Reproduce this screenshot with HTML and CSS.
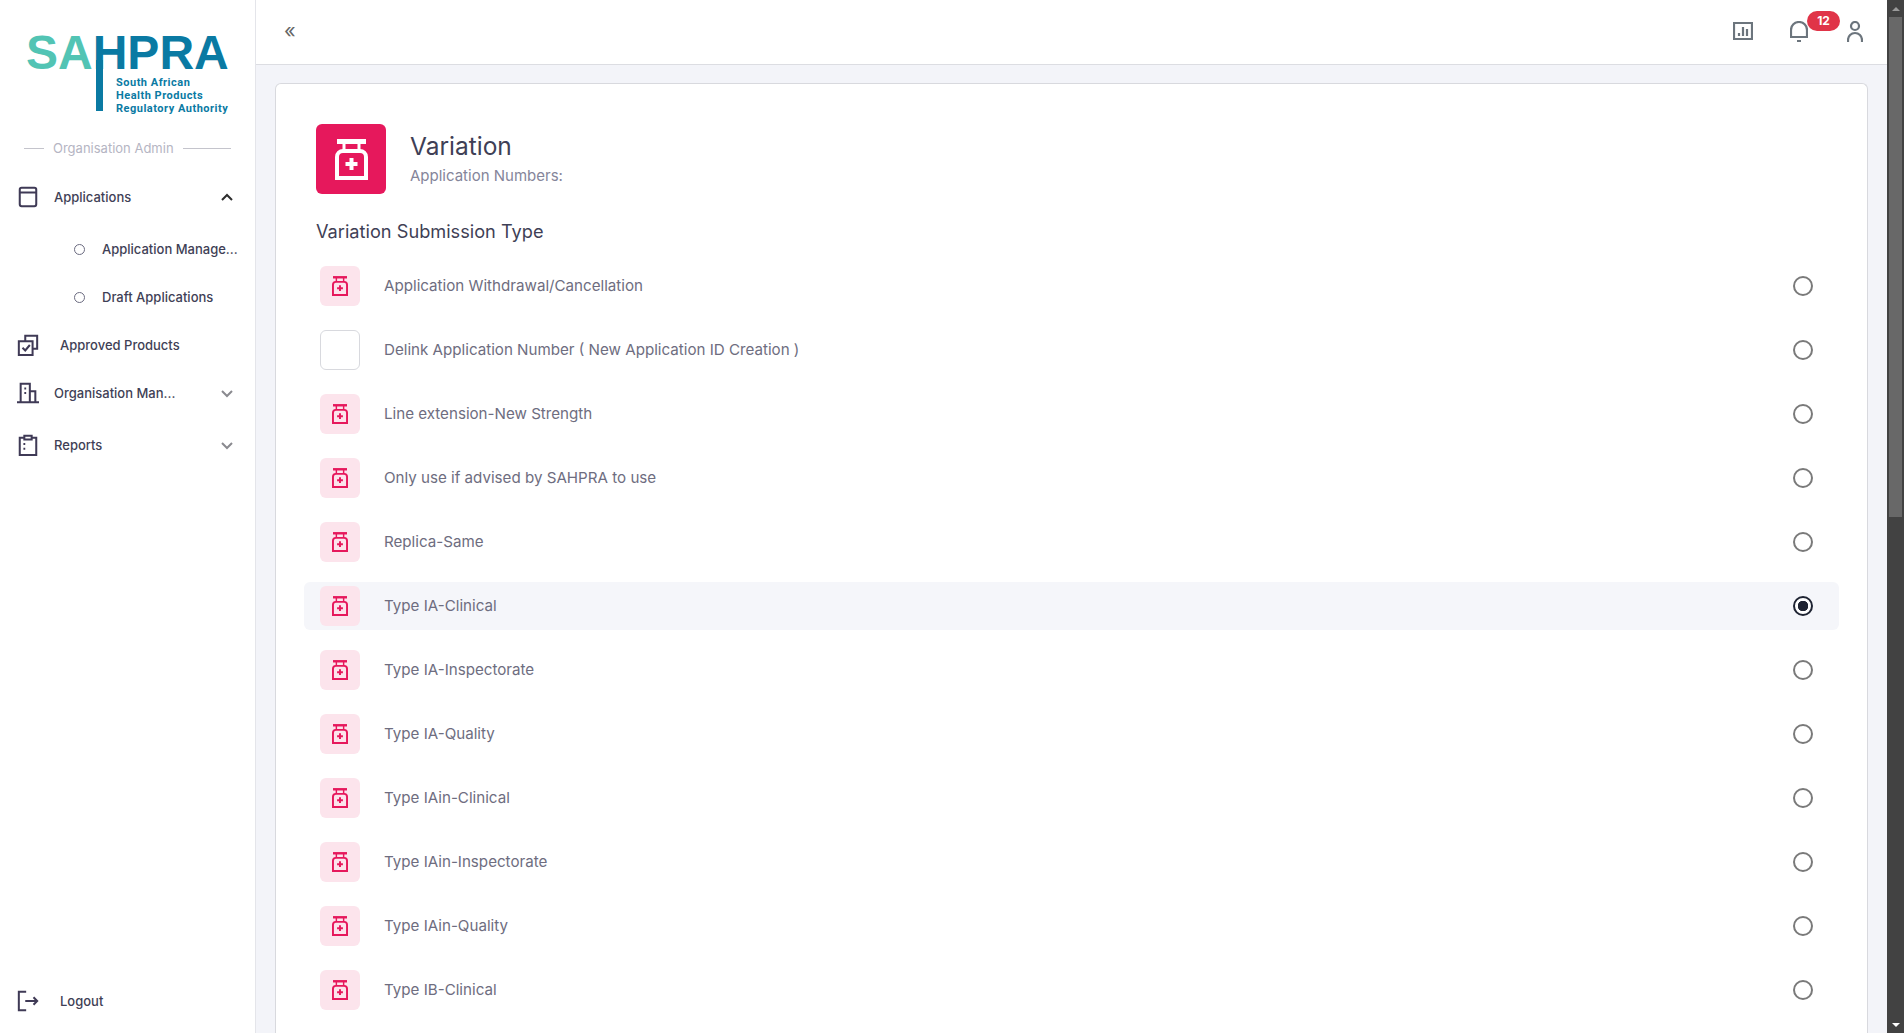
FILE: index.html
```html
<!DOCTYPE html>
<html lang="en">
<head>
    <meta charset="UTF-8">
    <meta name="viewport" content="width=device-width, initial-scale=1.0">
    <title>SAHPRA - Variation</title>
    <link rel="stylesheet" href="styles.css">
</head>
<body>
    <svg class="defs" aria-hidden="true">
        <symbol id="bottle" viewBox="0 0 33 41">
            <path d="M2 2.500H31" fill="none" stroke="currentColor" stroke-width="5"/>
            <path d="M9 4V12M24 4V12" fill="none" stroke="currentColor" stroke-width="3"/>
            <path d="M2 18a6 6 0 0 1 6-6h17a6 6 0 0 1 6 6V39H2Z" fill="none" stroke="currentColor" stroke-width="4"/>
            <path d="M16.500 19v12M10.500 25h12" fill="none" stroke="currentColor" stroke-width="4"/>
        </symbol>
    </svg>

    <div class="app">
        <aside class="sidebar">
            <div class="logo">
                <div class="logo-word"><span class="logo-sa">SA</span><span class="logo-h">H</span><span class="logo-pra">PRA</span></div>
                <div class="logo-stem"></div>
                <div class="logo-sub">South African<br>Health Products<br>Regulatory Authority</div>
            </div>

            <div class="role"><span>Organisation Admin</span></div>

            <nav class="menu">
                <div class="menu-item">
                    <svg class="menu-icon" viewBox="0 0 24 24"><path d="M5 2h14a2 2 0 0 1 2 2v16a2 2 0 0 1-2 2H5a2 2 0 0 1-2-2V4a2 2 0 0 1 2-2ZM3 7h18"/></svg>
                    <span class="menu-label">Applications</span>
                    <svg class="chevron chevron-open" viewBox="0 0 14 14"><path d="M2 10l5-5 5 5"/></svg>
                </div>
                <div class="sub-list">
                    <div class="sub-item"><i class="dot"></i><span>Application Manage...</span></div>
                    <div class="sub-item"><i class="dot"></i><span>Draft Applications</span></div>
                </div>
                <div class="menu-item">
                    <svg class="menu-icon" viewBox="0 0 24 24"><path d="M9 7V2h13v14h-5M2 8h15v15H2ZM6 15l3 3 5-6"/></svg>
                    <span class="menu-label menu-label-wide">Approved Products</span>
                </div>
                <div class="menu-item">
                    <svg class="menu-icon" viewBox="0 0 24 24"><path d="M0 22h24M4 22V2h10v20M8 7h2M8 12h2M14 10h6v12"/></svg>
                    <span class="menu-label">Organisation Man...</span>
                    <svg class="chevron" viewBox="0 0 14 14"><path d="M2 5l5 5 5-5"/></svg>
                </div>
                <div class="menu-item menu-item-gap">
                    <svg class="menu-icon" viewBox="0 0 24 24"><path d="M8 4H3v19h18V4h-5M8 2h8v4H8ZM7 11h2M7 16h2"/></svg>
                    <span class="menu-label">Reports</span>
                    <svg class="chevron" viewBox="0 0 14 14"><path d="M2 5l5 5 5-5"/></svg>
                </div>
            </nav>

            <div class="menu-item logout">
                <svg class="menu-icon" viewBox="0 0 24 24"><path d="M10 2H2v20h8M9 12h13M18 8l4 4-4 4"/></svg>
                <span class="menu-label menu-label-wide">Logout</span>
            </div>
        </aside>

        <div class="main">
            <header class="topbar">
                <span class="collapse">«</span>
                <div class="top-icons">
                    <svg class="top-icon chart" viewBox="0 0 20 18"><path d="M1 1h18v16H1ZM6 14v-3M10 14V5M14 14V7"/></svg>
                    <div class="bell-wrap">
                        <svg class="top-icon bell" viewBox="0 0 18 21"><path d="M1 16V9a8 8 0 0 1 16 0v7ZM7 20h4"/></svg>
                        <span class="badge">12</span>
                    </div>
                    <svg class="top-icon user" viewBox="0 0 16 21"><circle cx="8" cy="5" r="4"/><path d="M1 21v-2a7 7 0 0 1 14 0v2"/></svg>
                </div>
            </header>

            <section class="content">
                <div class="card">
                    <div class="card-head">
                        <div class="head-icon"><svg viewBox="0 0 33 41"><use href="#bottle"/></svg></div>
                        <div class="head-text">
                            <h1>Variation</h1>
                            <p>Application Numbers:</p>
                        </div>
                    </div>

                    <h2>Variation Submission Type</h2>

                    <div class="type-row">
                        <div class="type-icon"><svg viewBox="0 0 33 41"><use href="#bottle"/></svg></div>
                        <span class="type-name">Application Withdrawal/Cancellation</span>
                        <i class="radio"></i>
                    </div>
                    <div class="type-row">
                        <div class="type-icon type-icon-empty"></div>
                        <span class="type-name">Delink Application Number ( New Application ID Creation )</span>
                        <i class="radio"></i>
                    </div>
                    <div class="type-row">
                        <div class="type-icon"><svg viewBox="0 0 33 41"><use href="#bottle"/></svg></div>
                        <span class="type-name">Line extension-New Strength</span>
                        <i class="radio"></i>
                    </div>
                    <div class="type-row">
                        <div class="type-icon"><svg viewBox="0 0 33 41"><use href="#bottle"/></svg></div>
                        <span class="type-name">Only use if advised by SAHPRA to use</span>
                        <i class="radio"></i>
                    </div>
                    <div class="type-row">
                        <div class="type-icon"><svg viewBox="0 0 33 41"><use href="#bottle"/></svg></div>
                        <span class="type-name">Replica-Same</span>
                        <i class="radio"></i>
                    </div>
                    <div class="type-row selected">
                        <div class="type-icon"><svg viewBox="0 0 33 41"><use href="#bottle"/></svg></div>
                        <span class="type-name">Type IA-Clinical</span>
                        <i class="radio"></i>
                    </div>
                    <div class="type-row">
                        <div class="type-icon"><svg viewBox="0 0 33 41"><use href="#bottle"/></svg></div>
                        <span class="type-name">Type IA-Inspectorate</span>
                        <i class="radio"></i>
                    </div>
                    <div class="type-row">
                        <div class="type-icon"><svg viewBox="0 0 33 41"><use href="#bottle"/></svg></div>
                        <span class="type-name">Type IA-Quality</span>
                        <i class="radio"></i>
                    </div>
                    <div class="type-row">
                        <div class="type-icon"><svg viewBox="0 0 33 41"><use href="#bottle"/></svg></div>
                        <span class="type-name">Type IAin-Clinical</span>
                        <i class="radio"></i>
                    </div>
                    <div class="type-row">
                        <div class="type-icon"><svg viewBox="0 0 33 41"><use href="#bottle"/></svg></div>
                        <span class="type-name">Type IAin-Inspectorate</span>
                        <i class="radio"></i>
                    </div>
                    <div class="type-row">
                        <div class="type-icon"><svg viewBox="0 0 33 41"><use href="#bottle"/></svg></div>
                        <span class="type-name">Type IAin-Quality</span>
                        <i class="radio"></i>
                    </div>
                    <div class="type-row">
                        <div class="type-icon"><svg viewBox="0 0 33 41"><use href="#bottle"/></svg></div>
                        <span class="type-name">Type IB-Clinical</span>
                        <i class="radio"></i>
                    </div>
                </div>
            </section>
        </div>

        <div class="scrollbar">
            <div class="scroll-btn"><i class="arrow-up"></i></div>
            <div class="scroll-thumb"></div>
            <div class="scroll-track"></div>
            <div class="scroll-btn"><i class="arrow-down"></i></div>
        </div>
    </div>
</body>
</html>
```

FILE: styles.css
```css
* {
    margin: 0;
    padding: 0;
    box-sizing: border-box;
}

html, body {
    height: 100%;
    overflow: hidden;
}

body {
    font-family: Inter, "Noto Sans", sans-serif;
    color: #3f3f56;
    background: #f3f4f9;
}

.defs {
    display: none;
}

.app {
    display: flex;
    height: 100vh;
}

/* sidebar */
.sidebar {
    width: 256px;
    flex-shrink: 0;
    display: flex;
    flex-direction: column;
    background: white;
    border-right: 1px solid #e4e5ea;
}

.logo {
    position: relative;
    height: 135px;
}

.logo-word {
    position: absolute;
    top: 31px;
    left: 26px;
    font-family: "Liberation Sans", sans-serif;
    font-size: 48px;
    font-weight: bold;
    line-height: 44px;
    white-space: nowrap;
}

.logo-sa {
    color: #52c4b4;
}

.logo-h,
.logo-pra {
    color: #0a7aa3;
}

.logo-stem {
    position: absolute;
    top: 60px;
    left: 96px;
    width: 7px;
    height: 51px;
    background: #0a7aa3;
}

.logo-sub {
    position: absolute;
    top: 76px;
    left: 116px;
    font-family: Roboto, sans-serif;
    font-size: 11px;
    font-weight: bold;
    line-height: 13px;
    letter-spacing: 0.5px;
    color: #0a7aa3;
    white-space: nowrap;
}

.role {
    display: flex;
    align-items: center;
    gap: 9px;
    height: 26px;
    padding: 0 24px;
    font-size: 13px;
    color: #b5b5c3;
    white-space: nowrap;
}

.role::before,
.role::after {
    content: "";
    height: 1px;
    background: #c4c4cc;
}

.role::before {
    width: 20px;
}

.role::after {
    flex: 1;
}

.menu {
    margin-top: 12px;
}

.menu-item {
    display: flex;
    align-items: center;
    height: 48px;
    padding: 0 21px 0 18px;
    font-size: 13px;
    font-weight: 500;
}

.menu-item-gap {
    height: 52px;
    margin-top: 2px;
}

.menu-icon {
    width: 22px;
    height: 22px;
    margin-left: -1px;
    flex-shrink: 0;
    fill: none;
    stroke: #3f3a56;
    stroke-width: 2.2;
}

.menu-label {
    flex: 1;
    margin-left: 15px;
    white-space: nowrap;
}

.menu-label-wide {
    margin-left: 21px;
}

.chevron {
    width: 14px;
    height: 14px;
    fill: none;
    stroke: #8a8a8f;
    stroke-width: 2;
}

.chevron-open {
    stroke: #2d2d2d;
}

.sub-list {
    margin-top: 4px;
}

.sub-item {
    display: flex;
    align-items: center;
    height: 48px;
    padding-left: 74px;
    font-size: 13px;
    font-weight: 500;
    white-space: nowrap;
}

.dot {
    width: 11px;
    height: 11px;
    margin-right: 17px;
    border: 1px solid #6b6b80;
    border-radius: 50%;
}

.logout {
    margin-top: auto;
    margin-bottom: 8px;
}

/* top bar */
.main {
    flex: 1;
    min-width: 0;
    display: flex;
    flex-direction: column;
}

.topbar {
    display: flex;
    align-items: center;
    justify-content: space-between;
    height: 65px;
    flex-shrink: 0;
    padding: 0 24px 2px 28px;
    background: white;
    border-bottom: 1px solid #dcdde2;
}

.collapse {
    font-size: 20px;
    color: #666;
}

.top-icons {
    display: flex;
    align-items: center;
}

.top-icon {
    fill: none;
    stroke: #6c757d;
    stroke-width: 2.2;
}

.chart {
    width: 20px;
    height: 18px;
    margin-right: 37px;
}

.bell-wrap {
    position: relative;
    display: flex;
    margin-right: 39px;
}

.bell {
    width: 18px;
    height: 21px;
}

.user {
    width: 16px;
    height: 21px;
}

.badge {
    position: absolute;
    top: -10px;
    left: 17px;
    width: 33px;
    height: 20px;
    border-radius: 10px;
    background: #e03448;
    color: white;
    font-size: 12px;
    font-weight: 700;
    line-height: 20px;
    text-align: center;
}

/* content */
.content {
    flex: 1;
    min-height: 0;
    overflow: hidden;
    padding: 18px 19px 0;
}

.card {
    height: 100%;
    padding: 40px 28px 0 28px;
    background: white;
    border: 1px solid #d8d9de;
    border-bottom: none;
    border-radius: 6px 6px 0 0;
}

.card-head {
    display: flex;
    align-items: center;
    gap: 24px;
    padding-left: 12px;
}

.head-icon {
    display: flex;
    align-items: center;
    justify-content: center;
    width: 70px;
    height: 70px;
    border-radius: 6px;
    background: #e6185c;
    color: white;
}

.head-icon svg {
    width: 33px;
    height: 41px;
}

.head-text {
    padding-bottom: 3px;
}

.card-head h1 {
    font-size: 24.5px;
    font-weight: 400;
    line-height: 32px;
}

.card-head p {
    margin-top: 4px;
    font-size: 15px;
    line-height: 20px;
    color: #85859a;
}

.card h2 {
    margin: 25px 0 19px 12px;
    font-size: 18.2px;
    font-weight: 400;
    line-height: 24px;
}

.type-row {
    display: flex;
    align-items: center;
    height: 48px;
    margin-bottom: 16px;
    padding: 0 26px 0 16px;
    border-radius: 6px;
}

.type-row.selected {
    background: #f5f6fa;
}

.type-icon {
    display: flex;
    align-items: center;
    justify-content: center;
    width: 40px;
    height: 40px;
    flex-shrink: 0;
    border-radius: 6px;
    background: #fce4ec;
    color: #e6185c;
}

.type-icon svg {
    width: 16px;
    height: 20px;
}

.type-icon-empty {
    background: white;
    border: 1px solid #d8d9de;
}

.type-name {
    flex: 1;
    margin: 0 0 1px 24px;
    font-size: 15.15px;
    color: #6e6d80;
}

.radio {
    width: 20px;
    height: 20px;
    flex-shrink: 0;
    border: 2px solid #7a7a7a;
    border-radius: 50%;
}

.selected .radio {
    border-color: #1f2433;
    background: radial-gradient(circle, #1f2433 0, #1f2433 5px, white 5.5px);
}

/* page scrollbar */
.scrollbar {
    display: flex;
    flex-direction: column;
    align-items: stretch;
    width: 17px;
    flex-shrink: 0;
    background: #424242;
}

.scroll-btn {
    display: flex;
    align-items: center;
    justify-content: center;
    height: 17px;
}

.scroll-thumb {
    height: 500px;
    margin: 0 2px;
    background: #686868;
}

.scroll-track {
    flex: 1;
}

.arrow-up,
.arrow-down {
    width: 0;
    height: 0;
    border-left: 4px solid transparent;
    border-right: 4px solid transparent;
}

.arrow-up {
    border-bottom: 4px solid #9a9a9a;
}

.arrow-down {
    border-top: 4px solid white;
}
```
